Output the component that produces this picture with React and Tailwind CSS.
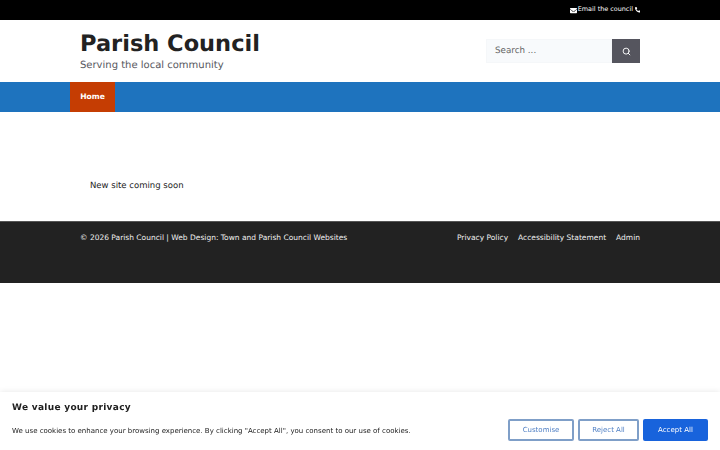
import { FaEnvelope, FaPhoneAlt } from 'react-icons/fa';
import { Search } from 'lucide-react';

const font = "font-['DejaVu_Sans',sans-serif] [text-rendering:geometricPrecision] antialiased";

function TopBar() {
  return (
    <div className="h-5 bg-black text-white">
      <div className="mx-auto flex h-full w-[560px] items-center justify-end text-[6.45px]">
        <FaEnvelope className="text-[7px]" />
        <span className="ml-[0.5px] mr-[1.5px]">Email the council</span>
        <FaPhoneAlt className="text-[5.5px]" />
      </div>
    </div>
  );
}

function Header() {
  return (
    <header className="h-[62px] bg-white">
      <div className="mx-auto flex h-full w-[560px] items-start justify-between">
        <div className="pt-[10px]">
          <div className="text-[22.5px] font-bold leading-[29px] text-[#222222]">Parish Council</div>
          <div className="text-[10px] leading-[14px] text-[#575760]">Serving the local community</div>
        </div>
        <div className="flex pt-[19px]">
          <div className="flex h-6 w-[126px] items-center border border-[#f5f7f9] bg-[#f8fafc] pl-2 pt-[2px] text-[8.75px] text-[#666666]">Search ...</div>
          <div className="flex h-6 w-[28px] items-center justify-center bg-[#55555e] text-white">
            <Search size={9} strokeWidth={2.5} />
          </div>
        </div>
      </div>
    </header>
  );
}

function Nav() {
  return (
    <nav className="h-[30px] bg-[#1e73be]">
      <div className="mx-auto flex h-full w-[580px]">
        <div className="flex h-full w-[45px] items-center justify-center bg-[#c53d03] text-[7.6px] font-bold text-white">Home</div>
      </div>
    </nav>
  );
}

function Footer() {
  return (
    <footer className="h-[62px] border-t border-[#555555] bg-[#222222] text-[#f0f0f0]">
      <div className="mx-auto flex w-[560px] justify-between pt-[10px] text-[7.5px] leading-[11px]">
        <div>© 2026 Parish Council | Web Design: Town and Parish Council Websites</div>
        <div className="flex gap-[10px]">
          <span>Privacy Policy</span>
          <span>Accessibility Statement</span>
          <span>Admin</span>
        </div>
      </div>
    </footer>
  );
}

function CookieBanner() {
  return (
    <div className="fixed inset-x-0 bottom-0 flex h-[58px] items-start justify-between bg-white px-3 shadow-[0_0_6px_rgba(0,0,0,0.1)]">
      <div className="pt-[9px]">
        <div className="text-[9px] font-bold leading-[14px] tracking-[0.3px] text-[#212121]">We value your privacy</div>
        <div className="pt-[10px] text-[7px] leading-[12px] text-[#212121]">
          We use cookies to enhance your browsing experience. By clicking "Accept All", you consent to our use of cookies.
        </div>
      </div>
      <div className="flex gap-[4px] pt-[27px] text-[7px]">
        <div className="flex h-[22px] w-[66px] items-center justify-center rounded-[2px] border-2 border-[#7f9fc8] text-[#4f7fc4]">Customise</div>
        <div className="flex h-[22px] w-[61px] items-center justify-center rounded-[2px] border-2 border-[#7f9fc8] text-[#4f7fc4]">Reject All</div>
        <div className="flex h-[22px] w-[65px] items-center justify-center rounded-[2px] bg-[#1863dc] text-white">Accept All</div>
      </div>
    </div>
  );
}

export default function App() {
  return (
    <div className={`${font} min-h-[450px] bg-white`}>
      <TopBar />
      <Header />
      <Nav />
      <main className="h-[109px] bg-white">
        <div className="mx-auto w-[540px] pt-[68px] text-[8.5px] leading-[12px] text-[#222222]">New site coming soon</div>
      </main>
      <Footer />
      <CookieBanner />
    </div>
  );
}
